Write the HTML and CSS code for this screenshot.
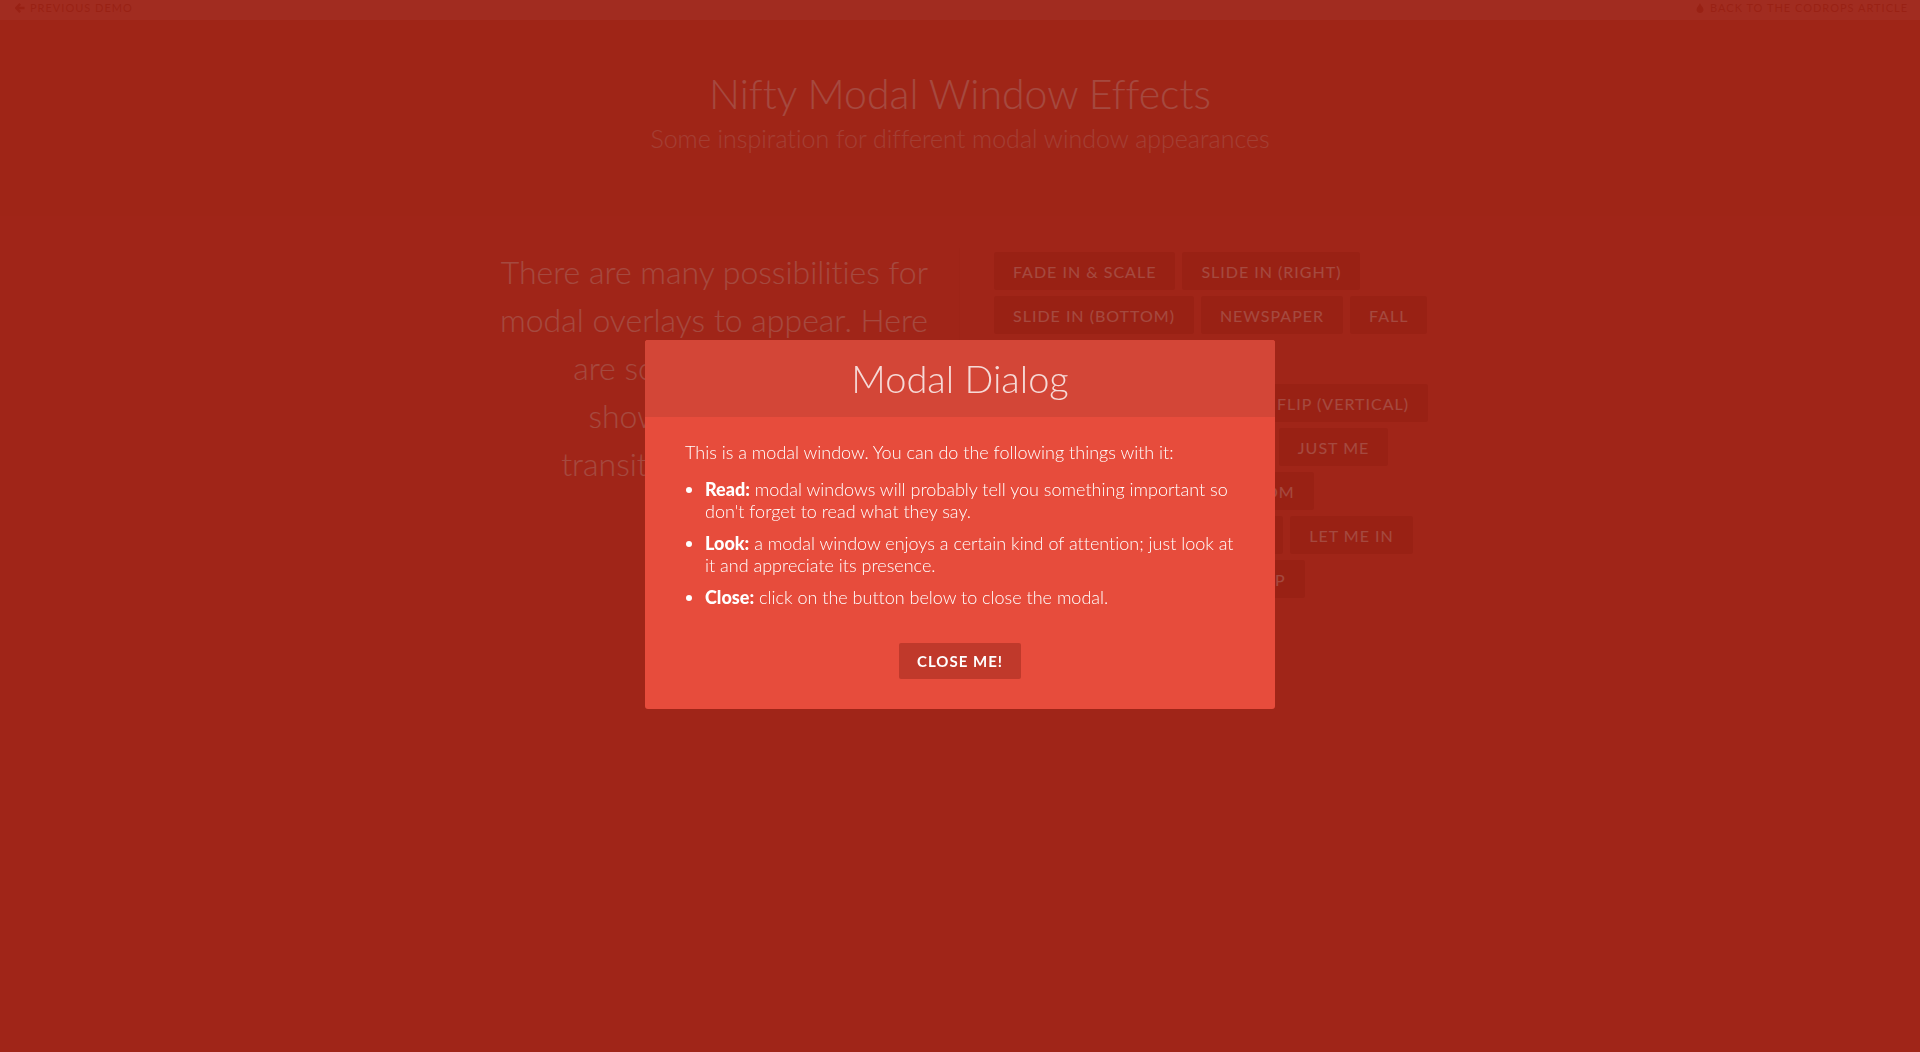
FILE: index.html
```
<!DOCTYPE html>
<html lang="en">
<head>
<meta charset="utf-8">
<meta name="viewport" content="width=device-width, initial-scale=1">
<title>Nifty Modal Window Effects</title>
<link rel="stylesheet" href="styles.css">
</head>
<body>
<div class="page">
  <nav class="top-bar">
    <a href="#"><svg class="icon" viewBox="0 0 10 10" aria-hidden="true"><path d="M5.200.800 1.200 5l4 4.200M1.500 5H9.600" fill="none" stroke="currentColor" stroke-width="2.400"/></svg>Previous Demo</a>
    <a href="#"><svg class="icon" viewBox="0 0 10 10" aria-hidden="true"><path d="M5 0C5.500 2.200 8.500 4 8.500 6.800 8.500 8.700 7 10 5 10S1.500 8.700 1.500 6.800C1.500 4 4.500 2.200 5 0Z" fill="currentColor"/></svg>Back to the Codrops Article</a>
  </nav>
  <header class="hero">
    <h1>Nifty Modal Window Effects</h1>
    <p>Some inspiration for different modal window appearances</p>
  </header>
  <main class="main">
    <div class="column intro">
      <p>There are many possibilities for modal overlays to appear. Here are some modern ways of showing them using CSS transitions and animations.</p>
    </div>
    <div class="column triggers">
      <button type="button">Fade in &amp; Scale</button>
      <button type="button">Slide in (right)</button>
      <button type="button">Slide in (bottom)</button>
      <button type="button">Newspaper</button>
      <button type="button">Fall</button>
      <button type="button">Side Fall</button>
      <button type="button">Sticky Up</button>
      <button type="button">3D Flip (horizontal)</button>
      <button type="button">3D Flip (vertical)</button>
      <button type="button">3D Sign</button>
      <button type="button">Super Scaled</button>
      <button type="button">Just Me</button>
      <button type="button">3D Slit</button>
      <button type="button">3D Rotate Bottom</button>
      <button type="button">3D Rotate In Left</button>
      <button type="button">Blur</button>
      <button type="button">Let me in</button>
      <button type="button">Make way!</button>
      <button type="button">Slip from top</button>
    </div>
  </main>
</div>
<div class="overlay">
  <section class="modal" role="dialog" aria-modal="true" aria-labelledby="modal-title">
    <h2 id="modal-title"><span>Modal Dialog</span></h2>
    <div class="modal-body">
      <p>This is a modal window. You can do the following things with it:</p>
      <ul>
        <li><strong>Read:</strong> modal windows will probably tell you something important so don't forget to read what they say.</li>
        <li><strong>Look:</strong> a modal window enjoys a certain kind of attention; just look at it and appreciate its presence.</li>
        <li><strong>Close:</strong> click on the button below to close the modal.</li>
      </ul>
      <button type="button" class="close">Close me!</button>
    </div>
  </section>
</div>
</body>
</html>
```
FILE: styles.css
```
*, *::before, *::after { box-sizing: border-box; }

body {
  margin: 0;
  min-height: 100vh;
  background: #e74c3c;
  color: #fff;
  font: 300 16px/1.4 Lato, Calibri, Arial, sans-serif;
  font-variant-ligatures: none;
}

h1, h2, p, ul { margin: 0; }

button {
  border: 0;
  border-radius: 2px;
  padding: 10px 19px 8px;
  background: #c0392b;
  color: #fff;
  font: 400 16px/20px Lato, Calibri, Arial, sans-serif;
  letter-spacing: 1px;
  text-transform: uppercase;
  cursor: pointer;
}

.top-bar {
  display: flex;
  justify-content: space-between;
  height: 20px;
  padding: 0 12px 0 15px;
  background: rgba(255, 255, 255, 0.2);
  font-size: 11px;
  font-weight: 400;
  line-height: 16px;
  letter-spacing: 1px;
  text-transform: uppercase;
}

.top-bar a { color: #c0392b; text-decoration: none; }

.icon {
  width: 10px;
  height: 10px;
  margin-right: 5px;
  vertical-align: -1px;
}

.hero {
  padding: 47px 32px 61px;
  background: rgba(0, 0, 0, 0.02);
  text-align: center;
}

.hero h1 { font-size: 41px; font-weight: 300; line-height: 54px; }
.hero p { font-size: 25px; line-height: 34px; opacity: 0.7; }

.main {
  display: grid;
  grid-template-columns: 1fr 1fr;
  max-width: 1104px;
  margin: 0 auto;
  padding: 32px 0;
}

.intro {
  padding: 0 31px 0 64px;
  border-right: 1px solid rgba(0, 0, 0, 0.05);
  text-align: right;
}

.intro p { font-size: 32px; line-height: 48px; }

.triggers {
  display: flex;
  flex-wrap: wrap;
  align-content: flex-start;
  gap: 6px 7px;
  padding: 4px 64px 0 34px;
}

.triggers button { height: 38px; }

/* Dimmed layer that centres the dialog in the window */
.overlay {
  position: fixed;
  inset: 0;
  display: grid;
  place-items: center;
  padding-bottom: 3px;
  background: rgba(143, 27, 15, 0.8);
}

.modal {
  width: 50%;
  max-width: 630px;
  min-width: 320px;
  overflow: hidden;
  border-radius: 3px;
  background: #e74c3c;
}

.modal h2 {
  padding: 15px;
  background: #d34637;
  font-size: 38px;
  font-weight: 300;
  line-height: 47px;
  text-align: center;
}

.modal h2 span { opacity: 0.8; }

.modal-body {
  padding: 14px 40px 30px;
  font-size: 18px;
  line-height: 22px;
}

.modal-body p { padding: 10px 0; }
.modal-body ul { padding: 0 0 30px 20px; }
.modal-body li { padding: 5px 0; }
.modal-body strong { font-weight: 900; }

.close {
  display: block;
  height: 36px;
  margin: 0 auto;
  padding: 8px 18px;
  font-size: 15px;
  font-weight: 700;
}
```
